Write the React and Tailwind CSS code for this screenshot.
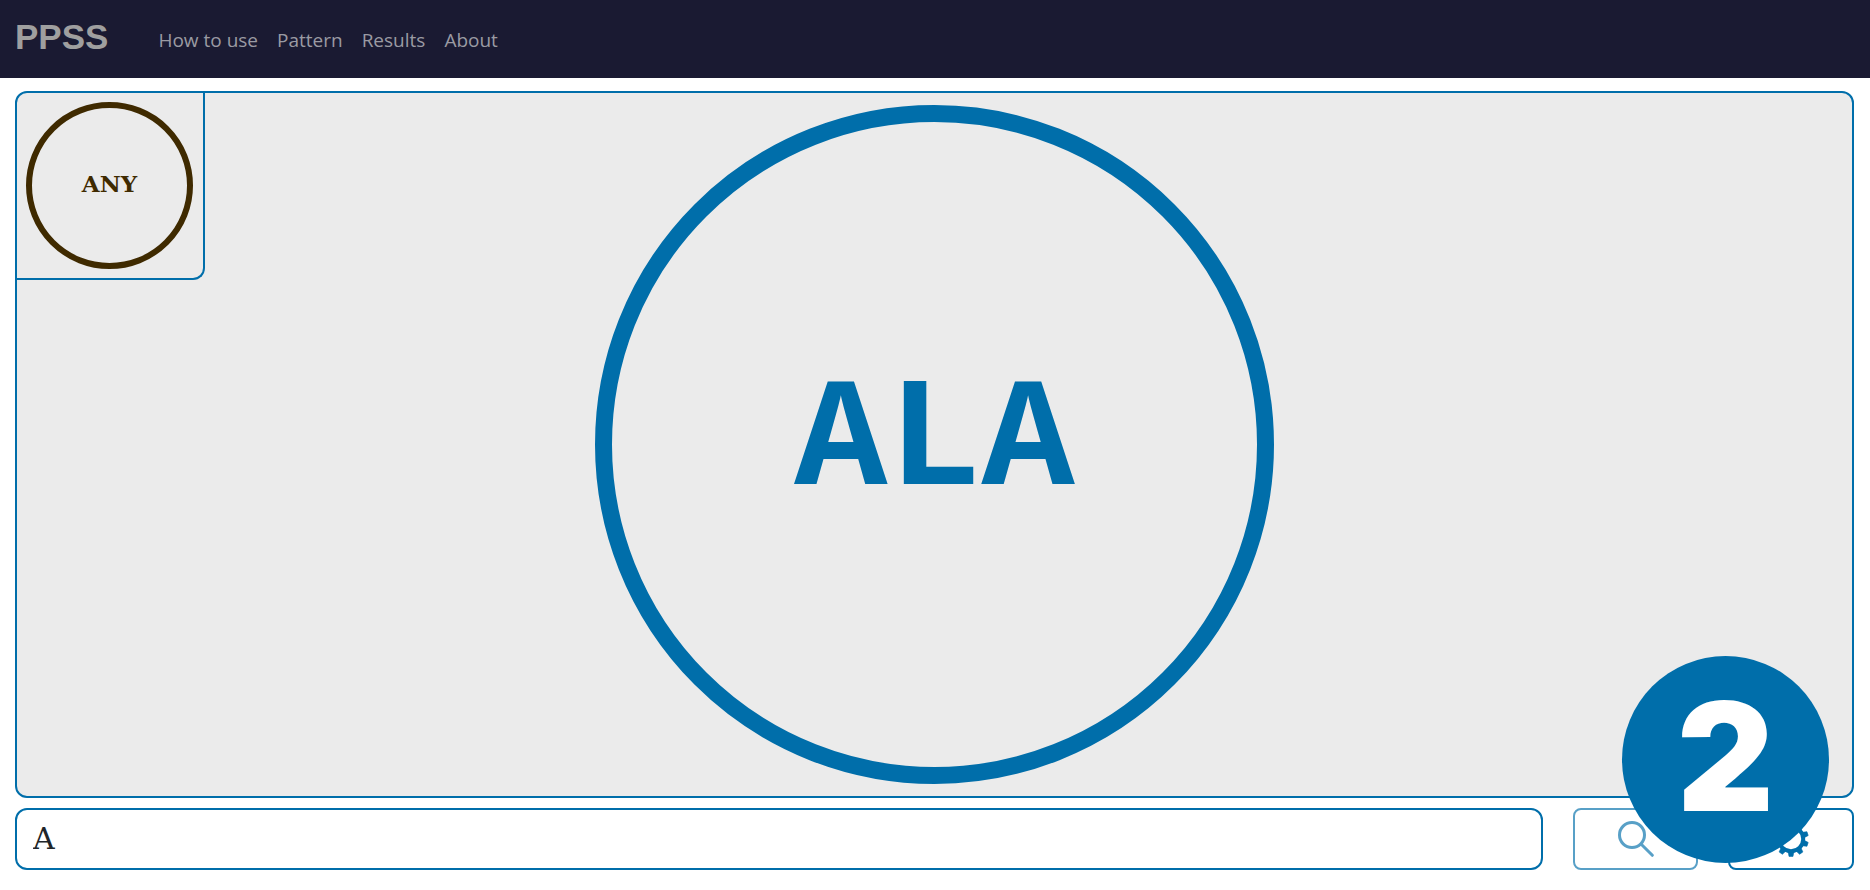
import React from "react";

const links = ["How to use", "Pattern", "Results", "About"];
const teeth = [18, 54, 90, 126, 162, 198, 234, 270, 306, 342];

function SearchIcon() {
  return (
    <svg className="size-9" viewBox="0 0 36 36" fill="none" stroke="currentColor" strokeWidth="3" strokeLinecap="round" aria-hidden="true">
      <circle cx="14" cy="14" r="12.5" />
      <path d="M23.5 23.5 34.3 34.3" />
    </svg>
  );
}

function GearIcon() {
  return (
    <svg className="size-9" viewBox="0 0 36 36" fill="none" stroke="currentColor" aria-hidden="true">
      <circle cx="18" cy="18" r="12.2" strokeWidth="4" />
      {teeth.map((a) => (
        <path key={a} d="M31 15.2 35.4 16V20L31 20.8Z" fill="currentColor" strokeWidth="0.6" strokeLinejoin="round" transform={`rotate(${a} 18 18)`} />
      ))}
    </svg>
  );
}

export default function App() {
  return (
    <div className="flex min-h-screen flex-col bg-white">
      <nav className="flex h-[78px] items-center bg-[#1a1a32] px-[15px]">
        <a href="#home" className="mb-1 font-['Liberation_Sans'] text-[35px] leading-10 font-bold text-[#9f9f9f]">
          PPSS
        </a>
        <ul className="mt-0.5 ml-[50px] flex gap-[19px] font-['Open_Sans'] text-[19px] leading-6 text-[#9a9aa3]">
          {links.map((l) => (
            <li key={l}>
              <a href="#nav">{l}</a>
            </li>
          ))}
        </ul>
      </nav>

      <main className="flex flex-1 flex-col gap-2.5 pt-[13px] pr-4 pb-5 pl-[15px]">
        <section className="relative flex flex-1 items-center justify-center rounded-xl border-2 border-[#006eaa] bg-[#ebebeb] py-3">
          <div className="absolute top-0 left-0 rounded-br-xl border-r-2 border-b-2 border-[#006eaa] p-[9px] pr-2.5">
            <div className="flex size-[167px] items-center justify-center rounded-full border-6 border-[#3f2a00] pb-0.5 font-['DejaVu_Serif'] text-[23px] font-bold text-[#3f2a00]">
              ANY
            </div>
          </div>
          <div className="flex aspect-square h-[calc(100vh-211px)] items-center justify-center rounded-full border-[17px] border-[#006eaa] pb-1 font-['Liberation_Mono'] text-[156px] leading-none font-bold text-[#006eaa]">
            ALA
          </div>
        </section>

        <form className="relative flex h-[62px] gap-[30px]" onSubmit={(e) => e.preventDefault()}>
          <input
            aria-label="Pattern"
            defaultValue="A"
            className="min-w-0 flex-1 rounded-xl border-2 border-[#006eaa] bg-white px-4 pb-0.5 font-['DejaVu_Serif'] text-[30px] text-[#212529] outline-none"
          />
          <button type="submit" disabled aria-label="Search" className="flex w-[125px] items-center justify-center rounded-lg border-2 border-[#006eaa] text-[#006eaa] opacity-65">
            <SearchIcon />
          </button>
          <button type="button" aria-label="Settings" className="flex w-[126px] items-center justify-center rounded-lg border-2 border-[#006eaa] text-[#006eaa]">
            <GearIcon />
          </button>
          <div className="absolute right-[25px] bottom-[7px] flex size-[207px] items-center justify-center rounded-full bg-[#006eaa] pb-1.5 font-['Inter'] text-[150px] leading-none font-black text-white">
            2
          </div>
        </form>
      </main>
    </div>
  );
}
